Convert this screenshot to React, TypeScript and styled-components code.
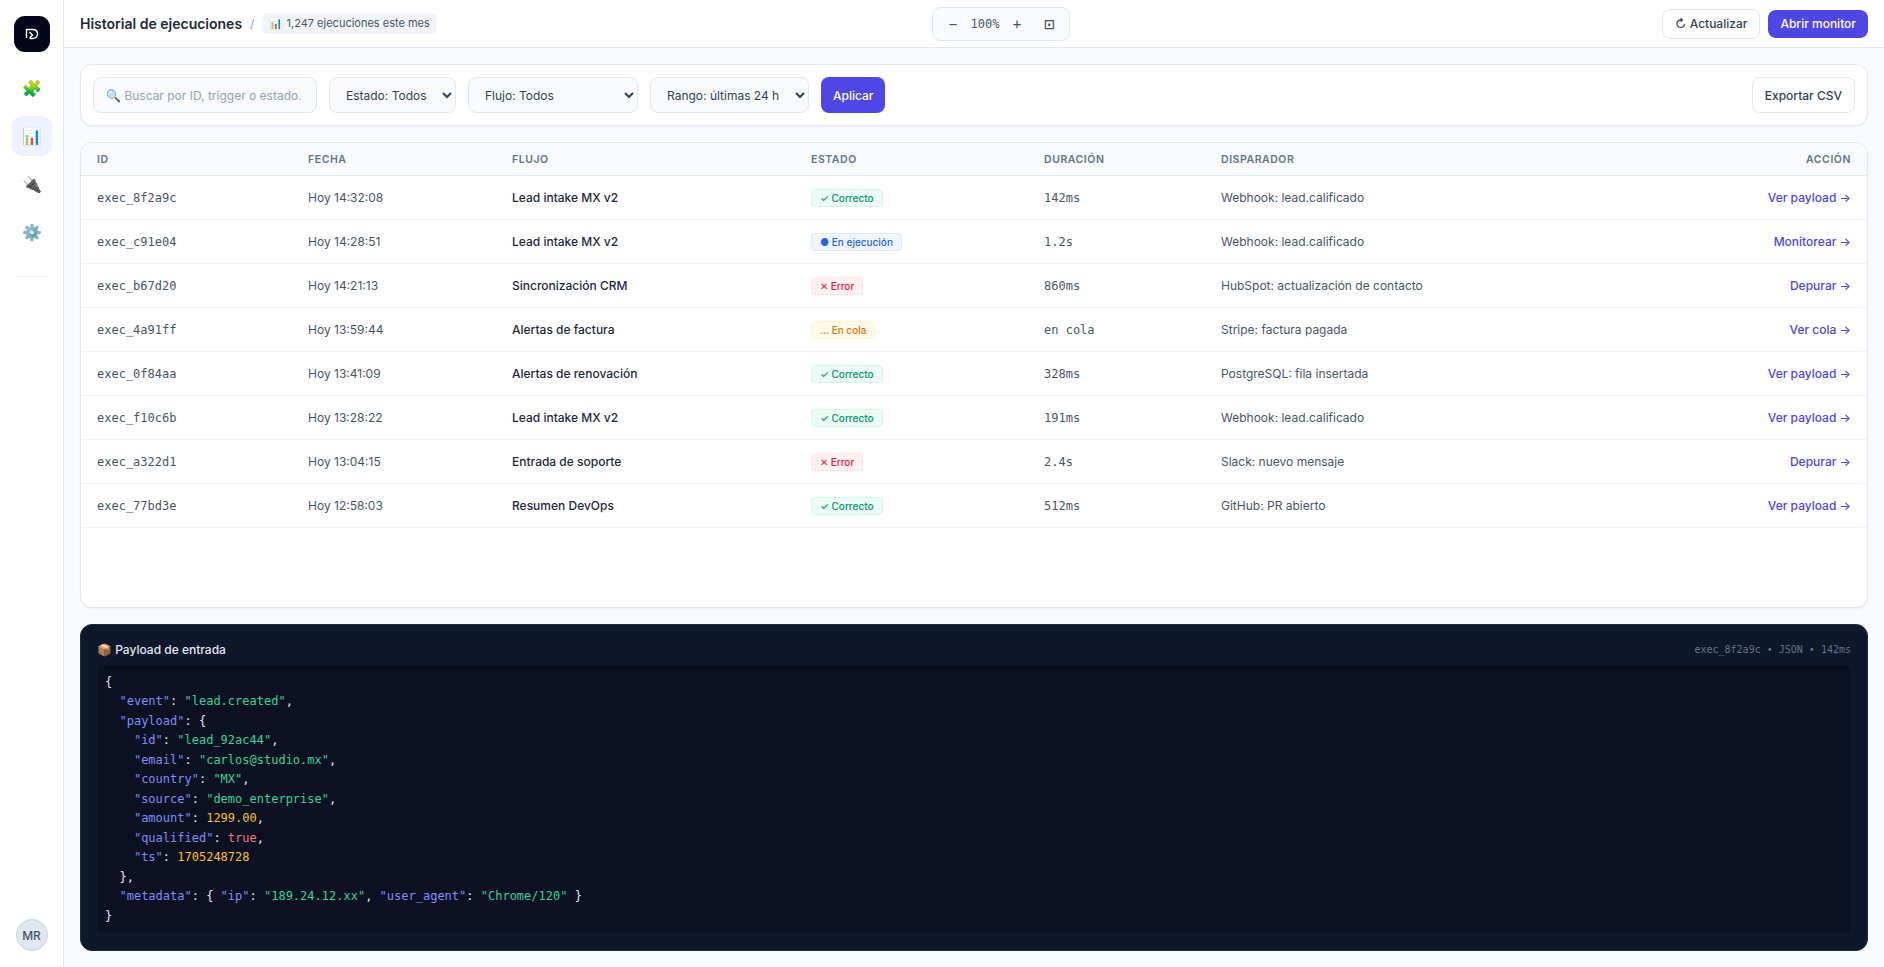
import React from 'react';
import styled, { createGlobalStyle } from 'styled-components';

const GlobalStyle = createGlobalStyle`
    html, body, #root {
        height: 100%;
    }
    body {
        margin: 0;
        background: #f8fafc;
        color: #0f172a;
        font-family: Inter, "Noto Sans", sans-serif;
    }
    * {
        box-sizing: border-box;
    }
`

const Shell = styled.div`
    display: flex;
    height: 100vh;
    overflow: hidden;
`

const Sidebar = styled.aside`
    width: 64px;
    flex-shrink: 0;
    display: flex;
    flex-direction: column;
    align-items: center;
    padding: 16px 0 16px;
    background: #fff;
    border-right: 1px solid #e2e8f0;
`

const LogoBox = styled.div`
    width: 36px;
    height: 36px;
    border-radius: 11px;
    background: #020617;
    display: flex;
    align-items: center;
    justify-content: center;
    margin-bottom: 16px;
`

const NavItem = styled.div<{ $active?: boolean }>`
    width: 40px;
    height: 40px;
    margin-bottom: 8px;
    border-radius: 10px;
    display: flex;
    align-items: center;
    justify-content: center;
    font-size: 16px;
    background: ${p => (p.$active ? '#eef2ff' : 'transparent')};
`

const NavDivider = styled.div`
    width: 32px;
    height: 1px;
    margin-top: 16px;
    background: #f1f5f9;
`

const Avatar = styled.div`
    margin-top: auto;
    width: 32px;
    height: 32px;
    border-radius: 50%;
    background: #e2e8f0;
    border: 1px solid #cbd5e1;
    color: #475569;
    font-size: 12px;
    font-weight: 500;
    display: flex;
    align-items: center;
    justify-content: center;
`

const Column = styled.div`
    flex: 1;
    min-width: 0;
    display: flex;
    flex-direction: column;
`

const TopBar = styled.header`
    height: 48px;
    flex-shrink: 0;
    display: grid;
    grid-template-columns: 852px auto 1fr;
    align-items: center;
    padding: 0 16px;
    background: #fff;
    border-bottom: 1px solid #e2e8f0;
`

const TitleGroup = styled.div`
    display: flex;
    align-items: center;
    gap: 8px;
`

const Title = styled.h1`
    margin: 0;
    font-size: 14px;
    font-weight: 600;
    color: #1e293b;
`

const Slash = styled.span`
    color: #94a3b8;
    font-size: 12px;
`

const Chip = styled.span`
    padding: 3px 7px;
    border-radius: 6px;
    background: #f1f5f9;
    color: #475569;
    font-size: 11px;
    line-height: 15px;
`

const ZoomBox = styled.div`
    width: 138px;
    height: 34px;
    display: flex;
    align-items: center;
    gap: 4px;
    padding: 0 8px;
    border: 1px solid #e2e8f0;
    border-radius: 8px;
    background: #f8fafc;
`

const ZoomButton = styled.span<{ $fit?: boolean }>`
    width: 24px;
    margin-left: ${p => (p.$fit ? '4px' : '0')};
    text-align: center;
    font-family: "DejaVu Sans Mono", monospace;
    font-size: ${p => (p.$fit ? '17px' : '14px')};
    color: #475569;
`

const ZoomValue = styled.span`
    font-family: "DejaVu Sans Mono", monospace;
    font-size: 12px;
    color: #475569;
    width: 32px;
    text-align: center;
`

const TopActions = styled.div`
    display: flex;
    justify-content: flex-end;
    gap: 8px;
`

const Button = styled.button<{ $primary?: boolean; $tall?: boolean }>`
    height: ${p => (p.$tall ? '36px' : p.$primary ? '28px' : '30px')};
    padding: 0 12px;
    font-family: inherit;
    font-size: 12px;
    font-weight: 500;
    border-radius: 8px;
    color: ${p => (p.$primary ? '#fff' : '#334155')};
    background: ${p => (p.$primary ? '#4f46e5' : '#fff')};
    border: ${p => (p.$primary ? '0' : '1px solid #e2e8f0')};
    align-self: center;
`

const Main = styled.main`
    flex: 1;
    min-height: 0;
    display: flex;
    flex-direction: column;
    gap: 16px;
    padding: 16px;
`

const FilterCard = styled.section`
    display: flex;
    align-items: center;
    gap: 12px;
    padding: 12px;
    background: #fff;
    border: 1px solid #e2e8f0;
    border-radius: 12px;
    box-shadow: 0 1px 2px rgba(15, 23, 42, 0.05);
`

const SearchInput = styled.input`
    width: 224px;
    height: 36px;
    padding: 0 13px 0 12px;
    font-family: inherit;
    font-size: 12px;
    color: #334155;
    background: #f8fafc;
    border: 1px solid #e2e8f0;
    border-radius: 8px;
    &::placeholder {
        color: #94a3b8;
    }
`

const Select = styled.select<{ $width: number }>`
    width: ${p => p.$width}px;
    height: 36px;
    padding: 0 12px;
    font-family: inherit;
    font-size: 12px;
    color: #334155;
    background: #f8fafc;
    border: 1px solid #e2e8f0;
    border-radius: 8px;
`

const Spacer = styled.div`
    flex: 1;
`

const TableCard = styled.section`
    flex: 1;
    min-height: 0;
    overflow: hidden;
    background: #fff;
    border: 1px solid #e2e8f0;
    border-radius: 12px;
    box-shadow: 0 1px 2px rgba(15, 23, 42, 0.05);
`

const Table = styled.table`
    width: 100%;
    border-collapse: collapse;
    table-layout: fixed;
`

const HeadCell = styled.th<{ $width?: number; $right?: boolean }>`
    width: ${p => (p.$width ? `${p.$width}px` : 'auto')};
    height: 32px;
    padding: 1px 16px 0;
    font-size: 10.5px;
    font-weight: 600;
    letter-spacing: 0.55px;
    color: #64748b;
    text-align: ${p => (p.$right ? 'right' : 'left')};
    background: #f8fafc;
    border-bottom: 1px solid #e2e8f0;
`

const Row = styled.tr`
    height: 44px;
    border-bottom: 1px solid #f1f5f9;
`

const Cell = styled.td<{ $strong?: boolean; $mono?: boolean; $right?: boolean }>`
    padding: 1px 16px 0;
    font-family: ${p => (p.$mono ? '"DejaVu Sans Mono", monospace' : 'inherit')};
    font-size: 12px;
    font-weight: ${p => (p.$strong ? 500 : 400)};
    color: ${p => (p.$strong ? '#1e293b' : '#475569')};
    text-align: ${p => (p.$right ? 'right' : 'left')};
`

const badgeColors = {
    success: { bg: '#ecfdf5', border: '#d1fae5', color: '#059669' },
    running: { bg: '#eff6ff', border: '#dbeafe', color: '#2563eb' },
    error: { bg: '#fff1f2', border: '#ffe4e6', color: '#e11d48' },
    queued: { bg: '#fffbeb', border: '#fef3c7', color: '#d97706' },
}

type Status = keyof typeof badgeColors

const Badge = styled.span<{ $status: Status }>`
    display: inline-flex;
    align-items: center;
    height: 18px;
    padding: 0 8px;
    border-radius: 4px;
    font-size: 10px;
    font-weight: 500;
    background: ${p => badgeColors[p.$status].bg};
    border: 1px solid ${p => badgeColors[p.$status].border};
    color: ${p => badgeColors[p.$status].color};
`

const ActionLink = styled.a`
    font-size: 12px;
    font-weight: 500;
    color: #4f46e5;
`

const PayloadCard = styled.section`
    flex-shrink: 0;
    height: 327px;
    padding: 14px 16px 16px;
    background: #0f172a;
    border: 1px solid #1e293b;
    border-radius: 12px;
`

const PayloadHead = styled.div`
    height: 20px;
    display: flex;
    align-items: center;
    justify-content: space-between;
    margin-bottom: 6px;
`

const PayloadTitle = styled.span`
    font-size: 12px;
    font-weight: 500;
    color: #e2e8f0;
`

const PayloadMeta = styled.span`
    font-family: "DejaVu Sans Mono", monospace;
    font-size: 10px;
    color: #64748b;
`

const Code = styled.div`
    height: 268px;
    padding: 7.5px 8px;
    border-radius: 6px;
    background: #0b1120;
    font-family: "DejaVu Sans Mono", monospace;
    font-size: 12px;
    color: #e2e8f0;
`

const CodeLine = styled.div`
    height: 19.5px;
    line-height: 19.5px;
    white-space: pre;
`

const Key = styled.span`
    color: #818cf8;
`

const Str = styled.span`
    color: #34d399;
`

const Num = styled.span`
    color: #fbbf24;
`

const Bool = styled.span`
    color: #fb7185;
`

type Execution = {
    id: string,
    date: string,
    flow: string,
    status: Status,
    label: string,
    duration: string,
    trigger: string,
    action: string
}

const executions: Execution[] = [
    { id: 'exec_8f2a9c', date: 'Hoy 14:32:08', flow: 'Lead intake MX v2', status: 'success', label: '✓ Correcto', duration: '142ms', trigger: 'Webhook: lead.calificado', action: 'Ver payload →' },
    { id: 'exec_c91e04', date: 'Hoy 14:28:51', flow: 'Lead intake MX v2', status: 'running', label: '● En ejecución', duration: '1.2s', trigger: 'Webhook: lead.calificado', action: 'Monitorear →' },
    { id: 'exec_b67d20', date: 'Hoy 14:21:13', flow: 'Sincronización CRM', status: 'error', label: '✕ Error', duration: '860ms', trigger: 'HubSpot: actualización de contacto', action: 'Depurar →' },
    { id: 'exec_4a91ff', date: 'Hoy 13:59:44', flow: 'Alertas de factura', status: 'queued', label: '... En cola', duration: 'en cola', trigger: 'Stripe: factura pagada', action: 'Ver cola →' },
    { id: 'exec_0f84aa', date: 'Hoy 13:41:09', flow: 'Alertas de renovación', status: 'success', label: '✓ Correcto', duration: '328ms', trigger: 'PostgreSQL: fila insertada', action: 'Ver payload →' },
    { id: 'exec_f10c6b', date: 'Hoy 13:28:22', flow: 'Lead intake MX v2', status: 'success', label: '✓ Correcto', duration: '191ms', trigger: 'Webhook: lead.calificado', action: 'Ver payload →' },
    { id: 'exec_a322d1', date: 'Hoy 13:04:15', flow: 'Entrada de soporte', status: 'error', label: '✕ Error', duration: '2.4s', trigger: 'Slack: nuevo mensaje', action: 'Depurar →' },
    { id: 'exec_77bd3e', date: 'Hoy 12:58:03', flow: 'Resumen DevOps', status: 'success', label: '✓ Correcto', duration: '512ms', trigger: 'GitHub: PR abierto', action: 'Ver payload →' },
];

const App = () => {
    return (
        <Shell>
            <GlobalStyle />
            <Sidebar>
                <LogoBox>
                    <svg width="14" height="12" viewBox="0 0 14 12" fill="none" stroke="#fff" strokeWidth="1.4">
                        <path d="M1.5 10V1.5H7.5C10.5 1.5 12.5 3.4 12.5 6C12.5 8.6 10.5 10.5 7.5 10.5H5" />
                        <path d="M4.5 4L7.5 7L4.5 10.5" />
                    </svg>
                </LogoBox>
                <NavItem>🧩</NavItem>
                <NavItem $active>📊</NavItem>
                <NavItem>🔌</NavItem>
                <NavItem>⚙️</NavItem>
                <NavDivider />
                <Avatar>MR</Avatar>
            </Sidebar>
            <Column>
                <TopBar>
                    <TitleGroup>
                        <Title>Historial de ejecuciones</Title>
                        <Slash>/</Slash>
                        <Chip>📊 1,247 ejecuciones este mes</Chip>
                    </TitleGroup>
                    <ZoomBox>
                        <ZoomButton>−</ZoomButton>
                        <ZoomValue>100%</ZoomValue>
                        <ZoomButton>+</ZoomButton>
                        <ZoomButton $fit>⊡</ZoomButton>
                    </ZoomBox>
                    <TopActions>
                        <Button>↻ Actualizar</Button>
                        <Button $primary>Abrir monitor</Button>
                    </TopActions>
                </TopBar>
                <Main>
                    <FilterCard>
                        <SearchInput placeholder="🔍 Buscar por ID, trigger o estado..." />
                        <Select $width={127}><option>Estado: Todos</option></Select>
                        <Select $width={170}><option>Flujo: Todos</option></Select>
                        <Select $width={159}><option>Rango: últimas 24 h</option></Select>
                        <Button $primary $tall>Aplicar</Button>
                        <Spacer />
                        <Button $tall>Exportar CSV</Button>
                    </FilterCard>
                    <TableCard>
                        <Table>
                            <thead>
                                <tr>
                                    <HeadCell $width={211}>ID</HeadCell>
                                    <HeadCell $width={204}>FECHA</HeadCell>
                                    <HeadCell $width={299}>FLUJO</HeadCell>
                                    <HeadCell $width={233}>ESTADO</HeadCell>
                                    <HeadCell $width={177}>DURACIÓN</HeadCell>
                                    <HeadCell>DISPARADOR</HeadCell>
                                    <HeadCell $right>ACCIÓN</HeadCell>
                                </tr>
                            </thead>
                            <tbody>
                                {executions.map(item => (
                                    <Row key={item.id}>
                                        <Cell $mono>{item.id}</Cell>
                                        <Cell>{item.date}</Cell>
                                        <Cell $strong>{item.flow}</Cell>
                                        <Cell><Badge $status={item.status}>{item.label}</Badge></Cell>
                                        <Cell $mono>{item.duration}</Cell>
                                        <Cell>{item.trigger}</Cell>
                                        <Cell $right><ActionLink>{item.action}</ActionLink></Cell>
                                    </Row>
                                ))}
                            </tbody>
                        </Table>
                    </TableCard>
                    <PayloadCard>
                        <PayloadHead>
                            <PayloadTitle>📦 Payload de entrada</PayloadTitle>
                            <PayloadMeta>exec_8f2a9c • JSON • 142ms</PayloadMeta>
                        </PayloadHead>
                        <Code>
                            <CodeLine>{'{'}</CodeLine>
                            <CodeLine>{'  '}<Key>"event"</Key>: <Str>"lead.created"</Str>,</CodeLine>
                            <CodeLine>{'  '}<Key>"payload"</Key>: {'{'}</CodeLine>
                            <CodeLine>{'    '}<Key>"id"</Key>: <Str>"lead_92ac44"</Str>,</CodeLine>
                            <CodeLine>{'    '}<Key>"email"</Key>: <Str>"carlos@studio.mx"</Str>,</CodeLine>
                            <CodeLine>{'    '}<Key>"country"</Key>: <Str>"MX"</Str>,</CodeLine>
                            <CodeLine>{'    '}<Key>"source"</Key>: <Str>"demo_enterprise"</Str>,</CodeLine>
                            <CodeLine>{'    '}<Key>"amount"</Key>: <Num>1299.00</Num>,</CodeLine>
                            <CodeLine>{'    '}<Key>"qualified"</Key>: <Bool>true</Bool>,</CodeLine>
                            <CodeLine>{'    '}<Key>"ts"</Key>: <Num>1705248728</Num></CodeLine>
                            <CodeLine>{'  },'}</CodeLine>
                            <CodeLine>{'  '}<Key>"metadata"</Key>: {'{ '}<Key>"ip"</Key>: <Str>"189.24.12.xx"</Str>, <Key>"user_agent"</Key>: <Str>"Chrome/120"</Str>{' }'}</CodeLine>
                            <CodeLine>{'}'}</CodeLine>
                        </Code>
                    </PayloadCard>
                </Main>
            </Column>
        </Shell>
    );
}

export default App;
